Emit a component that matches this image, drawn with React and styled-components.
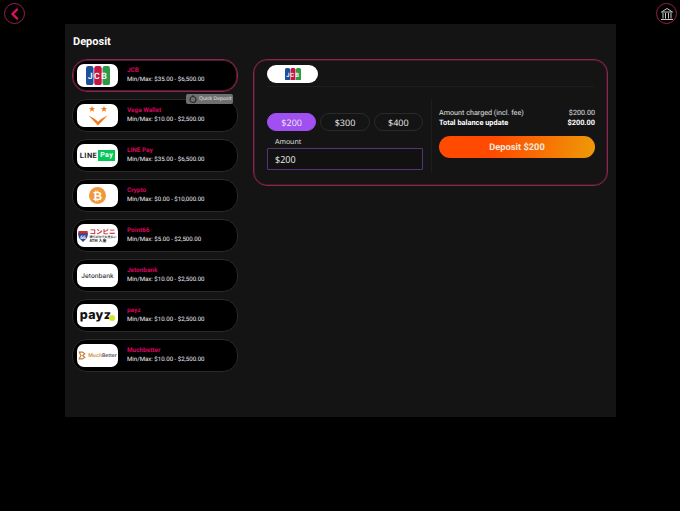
import React from "react";
import styled, { createGlobalStyle } from "styled-components";

function JcbLogo({ small }) {
  const w = small ? 16 : 24;
  return (
    <svg width={w} height={w * 0.8} viewBox="0 0 30 24">
      <rect x="0" y="0" width="9.4" height="24" rx="3" fill="#1d4f9c" />
      <rect x="10.3" y="0" width="9.4" height="24" rx="3" fill="#c4163f" />
      <rect x="20.6" y="0" width="9.4" height="24" rx="3" fill="#2f9a45" />
      <text x="15" y="16" textAnchor="middle" fontFamily="Roboto, sans-serif" fontWeight="700" fontSize="11" letterSpacing="1.800" fill="#f2f6fa">
        JCB
      </text>
    </svg>
  );
}

function VegaLogo() {
  return (
    <svg width="24" height="21" viewBox="0 0 24 21" fill="#f47a1f">
      <path d="M6 1l.9 2 2.100.2-1.600 1.400.5 2.100L6 5.600 4.100 6.700l.5-2.100L3 3.200l2.100-.2z" />
      <path d="M18 1l.9 2 2.100.2-1.600 1.400.5 2.100L18 5.600l-1.900 1.100.5-2.100L15 3.200l2.100-.2z" />
      <path d="M2.500 10.500L12 15.500l9.500-5L12 20.500z" />
      <path d="M6.500 11.800L12 14.500l5.500-2.700L12 16.800z" fill="#fff" />
    </svg>
  );
}

function LineLogo() {
  return (
    <LineWrap>
      LINE<LinePay>Pay</LinePay>
    </LineWrap>
  );
}

function CryptoLogo() {
  return (
    <svg width="17" height="17" viewBox="0 0 17 17">
      <circle cx="8.500" cy="8.500" r="8.500" fill="#f0983a" />
      <text x="8.500" y="12.500" textAnchor="middle" fontFamily="Roboto, sans-serif" fontWeight="700" fontSize="11.500" fill="#fff">
        ₿
      </text>
    </svg>
  );
}

function PointLogo() {
  return (
    <PointWrap>
      <svg width="10" height="12" viewBox="0 0 10 12">
        <path d="M1 1h8l1 3-1 4-4 4-4-4-1-4z" fill="#2b4a9a" />
        <rect x="0.500" y="1" width="9" height="2.500" fill="#d32a2a" />
        <text x="5" y="9" textAnchor="middle" fontFamily="Roboto, sans-serif" fontWeight="700" fontSize="5" fill="#fff">
          66
        </text>
      </svg>
      <PointText>
        <PointTop>コンビニ</PointTop>
        <PointMid>銀行ATMでお支払い</PointMid>
        <PointBottom>ATM 入金</PointBottom>
      </PointText>
    </PointWrap>
  );
}

function JetonLogo() {
  return <JetonText>Jetonbank</JetonText>;
}

function PayzLogo() {
  return (
    <PayzText>
      payz<PayzDot />
    </PayzText>
  );
}

function MuchLogo() {
  return (
    <MuchWrap>
      <svg width="8" height="9" viewBox="0 0 7 8" fill="none" stroke="#c9803a" strokeWidth="1">
        <path d="M1 1h3l2 1.500L4 4l2 1.500L4 7H1l1.500-3z" />
      </svg>
      <MuchName>
        Much<MuchAccent>Better</MuchAccent>
      </MuchName>
    </MuchWrap>
  );
}

const methods = [
  { name: "JCB", range: "$35.00 - $6,500.00", Logo: JcbLogo, active: true },
  { name: "Vega Wallet", range: "$10.00 - $2,500.00", Logo: VegaLogo, quick: true },
  { name: "LINE Pay", range: "$35.00 - $6,500.00", Logo: LineLogo },
  { name: "Crypto", range: "$0.00 - $10,000.00", Logo: CryptoLogo },
  { name: "Point66", range: "$5.00 - $2,500.00", Logo: PointLogo },
  { name: "Jetonbank", range: "$10.00 - $2,500.00", Logo: JetonLogo },
  { name: "payz", range: "$10.00 - $2,500.00", Logo: PayzLogo },
  { name: "Muchbetter", range: "$10.00 - $2,500.00", Logo: MuchLogo },
];

const amounts = ["$200", "$300", "$400"];

const App = () => {
  return (
    <Page>
      <GlobalStyle />
      <TopBar>
        <CircleButton>
          <svg width="12" height="12" viewBox="0 0 12 12" fill="none" stroke="#e0125f" strokeWidth="2.400" strokeLinecap="round" strokeLinejoin="round">
            <path d="M8 1.500L3.500 6 8 10.500" />
          </svg>
        </CircleButton>
        <CircleButton>
          <svg width="14" height="14" viewBox="0 0 14 14" fill="none" stroke="#c9c9c9" strokeWidth="1">
            <path d="M1.500 5L7 1.500 12.500 5zM3 6v5.500M5.500 6v5.500M8.500 6v5.500M11 6v5.500M1 12.500h12" />
          </svg>
        </CircleButton>
      </TopBar>

      <Panel>
        <Title>Deposit</Title>
        <Columns>
          <MethodList>
            {methods.map(({ name, range, Logo, active, quick }) => (
              <MethodRow key={name} $active={active}>
                <LogoBox>
                  <Logo />
                </LogoBox>
                <MethodInfo>
                  <MethodName>{name}</MethodName>
                  <MethodRange>Min/Max: {range}</MethodRange>
                </MethodInfo>
                {quick && (
                  <QuickBadge>
                    <svg width="8" height="8" viewBox="0 0 8 8" fill="none" stroke="#2c2c2c" strokeWidth="1.200">
                      <circle cx="4" cy="4.500" r="3" />
                      <path d="M4 0v2" />
                    </svg>
                    Quick Deposit
                  </QuickBadge>
                )}
              </MethodRow>
            ))}
          </MethodList>

          <DepositCard>
            <TabBar>
              <TabPill>
                <JcbLogo small />
              </TabPill>
            </TabBar>
            <CardBody>
              <FormSide>
                <AmountRow>
                  {amounts.map((a, i) => (
                    <AmountButton key={a} $active={i === 0}>
                      {a}
                    </AmountButton>
                  ))}
                </AmountRow>
                <AmountLabel>Amount</AmountLabel>
                <AmountInput readOnly value="$200" />
              </FormSide>
              <SummarySide>
                <SummaryRow>
                  <span>Amount charged (incl. fee)</span>
                  <span>$200.00</span>
                </SummaryRow>
                <SummaryRow $bold>
                  <span>Total balance update</span>
                  <span>$200.00</span>
                </SummaryRow>
                <DepositButton>Deposit $200</DepositButton>
              </SummarySide>
            </CardBody>
          </DepositCard>
        </Columns>
      </Panel>
    </Page>
  );
};

// styled components
const GlobalStyle = createGlobalStyle`
  html, body {
    margin: 0;
    background: #000;
  }

  * {
    box-sizing: border-box;
  }
`;

const Page = styled.div`
  width: 680px;
  height: 511px;
  background: #000;
  font-family: "Open Sans", sans-serif;
  color: #fff;
  overflow: hidden;
  text-rendering: geometricPrecision;
`;

const TopBar = styled.header`
  display: flex;
  justify-content: space-between;
  height: 24px;
  padding: 3px 3px 0 4px;
`;

const CircleButton = styled.div`
  width: 21px;
  height: 21px;
  border: 1px solid #991f52;
  border-radius: 50%;
  display: flex;
  align-items: center;
  justify-content: center;
`;

const Panel = styled.main`
  width: 551px;
  height: 393px;
  margin-left: 65px;
  padding: 11px 8px 0 7px;
  background: #141414;
`;

const Title = styled.h1`
  margin: 0 0 0 1px;
  height: 24px;
  font-family: Roboto, sans-serif;
  font-size: 11px;
  font-weight: 700;
  line-height: 13px;
`;

const Columns = styled.div`
  display: flex;
  gap: 15px;
  align-items: flex-start;
`;

const MethodList = styled.div`
  width: 166px;
  display: flex;
  flex-direction: column;
  gap: 7px;
`;

const MethodRow = styled.div`
  position: relative;
  height: 33px;
  display: flex;
  align-items: center;
  gap: 9px;
  padding-left: 4px;
  background: #000;
  border: 1px solid ${p => (p.$active ? "#8a2650" : "#2a2a2a")};
  box-shadow: ${p => (p.$active ? "inset 0 0 0 1px #4a1a30" : "none")};
  border-radius: 15px;
`;

const LogoBox = styled.div`
  width: 41px;
  height: 23px;
  flex: none;
  display: flex;
  align-items: center;
  justify-content: center;
  background: #fff;
  border-radius: 7px;
  overflow: hidden;
`;

const MethodInfo = styled.div`
  display: flex;
  flex-direction: column;
  gap: 2px;
`;

const MethodName = styled.div`
  color: #d9045f;
  font-family: Roboto, sans-serif;
  font-size: 6.400px;
  font-weight: 700;
  line-height: 7px;
`;

const MethodRange = styled.div`
  color: #f0edf5;
  font-family: Roboto, sans-serif;
  font-size: 6.100px;
  line-height: 8px;
  white-space: nowrap;
`;

const QuickBadge = styled.div`
  position: absolute;
  top: -6px;
  right: 4px;
  height: 10px;
  width: 47px;
  display: flex;
  align-items: center;
  gap: 2px;
  padding-left: 3px;
  background: #6f6f6f;
  border-radius: 2px;
  color: #ededed;
  font-size: 5px;
  white-space: nowrap;
`;

const JetonText = styled.span`
  color: #2a2a2a;
  font-family: Inter, sans-serif;
  font-size: 6.400px;
  font-weight: 500;
`;

const LineWrap = styled.div`
  display: flex;
  align-items: center;
  gap: 1px;
  color: #222;
  font-family: Roboto, sans-serif;
  font-size: 7.500px;
  font-weight: 700;
  letter-spacing: 0.4px;
`;

const LinePay = styled.span`
  padding: 1px 2px;
  background: #06c755;
  color: #fff;
  font-size: 7px;
  line-height: 9px;
`;

const PointWrap = styled.div`
  display: flex;
  align-items: center;
  gap: 1px;
`;

const PointText = styled.div`
  display: flex;
  flex-direction: column;
  font-family: "Noto Sans CJK JP", sans-serif;
  font-weight: 700;
`;

const PointTop = styled.span`
  color: #c8242c;
  font-size: 6.500px;
  line-height: 7px;
`;

const PointMid = styled.span`
  color: #444;
  font-size: 3px;
  line-height: 4px;
  white-space: nowrap;
`;

const PointBottom = styled.span`
  color: #222;
  font-size: 4px;
  line-height: 4px;
`;

const PayzText = styled.div`
  display: flex;
  align-items: flex-end;
  color: #111;
  font-family: Inter, sans-serif;
  font-size: 12.500px;
  font-weight: 800;
  line-height: 14px;
  letter-spacing: 0.3px;
`;

const PayzDot = styled.span`
  width: 6px;
  height: 6px;
  margin: 0 0 2px -2px;
  border-radius: 50%;
  background: #d4e629;
`;

const MuchWrap = styled.div`
  display: flex;
  align-items: center;
  gap: 2px;
`;

const MuchName = styled.span`
  color: #d49a4a;
  font-family: Inter, sans-serif;
  font-size: 5px;
  font-weight: 700;
`;

const MuchAccent = styled.span`
  color: #666;
`;

const DepositCard = styled.section`
  width: 355px;
  height: 127px;
  padding: 5px 13px 0;
  border: 1px solid #8a2650;
  box-shadow: inset 0 0 0 1px #3e1829;
  border-radius: 14px;
`;

const TabBar = styled.div`
  height: 22px;
  border-bottom: 1px solid #1e1e1e;
`;

const TabPill = styled.div`
  width: 51px;
  height: 18px;
  display: flex;
  align-items: center;
  justify-content: center;
  background: #fff;
  border-radius: 9px;
`;

const CardBody = styled.div`
  display: flex;
`;

const FormSide = styled.div`
  width: 164px;
  flex: none;
  padding: 26px 8px 0 0;
`;

const AmountRow = styled.div`
  display: flex;
  gap: 4px;
`;

const AmountButton = styled.div`
  flex: 1;
  height: 18px;
  display: flex;
  align-items: center;
  justify-content: center;
  background: ${p => (p.$active ? "#a04ff0" : "transparent")};
  border: 1px solid ${p => (p.$active ? "#a04ff0" : "#2a2a2a")};
  border-radius: 9px;
  color: #ececec;
  font-size: 9px;
`;

const AmountLabel = styled.div`
  margin: 7px 0 1px 8px;
  height: 9px;
  color: #e6e6e6;
  font-size: 7px;
  line-height: 9px;
`;

const AmountInput = styled.input`
  display: block;
  width: 156px;
  height: 22px;
  padding: 0 7px;
  background: #111;
  border: 1px solid #553577;
  border-radius: 1px;
  color: #ececec;
  font-family: "Open Sans", sans-serif;
  font-size: 9px;
  outline: none;
`;

const SummarySide = styled.div`
  flex: 1;
  height: 72px;
  margin-top: 13px;
  padding: 8px 0 0 7px;
  border-left: 1px solid #1e1e1e;
`;

const SummaryRow = styled.div`
  display: flex;
  justify-content: space-between;
  width: 156px;
  height: 10px;
  color: ${p => (p.$bold ? "#fff" : "#e0e0e0")};
  font-family: Roboto, sans-serif;
  font-size: ${p => (p.$bold ? "7.400px" : "7.200px")};
  font-weight: ${p => (p.$bold ? 700 : 400)};
  line-height: 10px;
`;

const DepositButton = styled.div`
  width: 156px;
  height: 22px;
  margin-top: 8px;
  display: flex;
  align-items: center;
  justify-content: center;
  background: linear-gradient(100deg, #ff4a00 0%, #ff4a00 35%, #ee9a08 100%);
  border-radius: 11px;
  color: #f4e8dc;
  font-family: Roboto, sans-serif;
  font-size: 9.300px;
  font-weight: 700;
`;

export default App;
